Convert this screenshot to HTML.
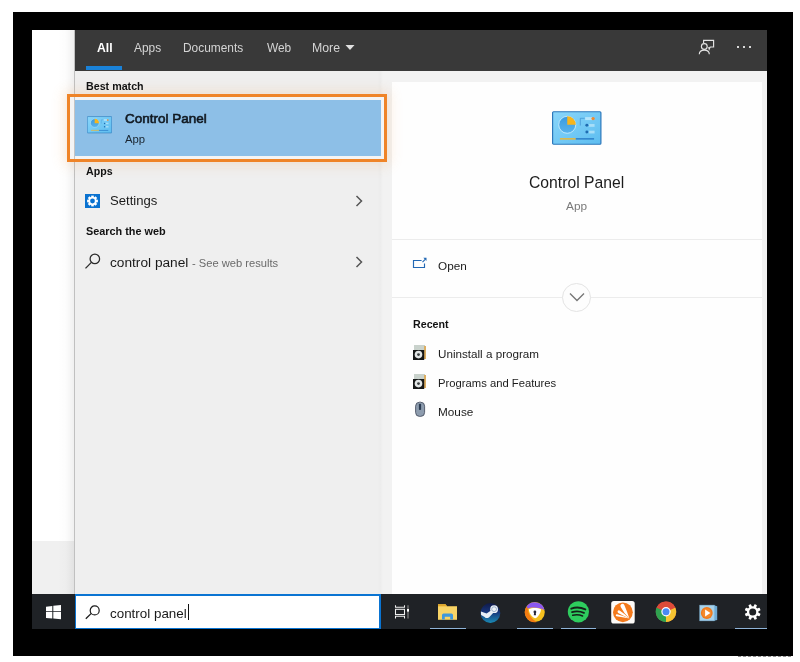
<!DOCTYPE html>
<html><head><meta charset="utf-8">
<style>
html,body{margin:0;padding:0}
body{width:800px;height:662px;position:relative;overflow:hidden;background:#fff;font-family:"Liberation Sans",sans-serif}
.a{position:absolute}
.t{position:absolute;white-space:nowrap;line-height:1;will-change:transform}
</style></head><body>
<div class="a" style="left:13px;top:12px;width:780px;height:643.5px;background:#000"></div>
<div class="a" style="left:738px;top:655px;width:53px;height:2px;background:repeating-linear-gradient(to right,rgba(0,0,0,0.55) 0 3px,rgba(0,0,0,0.1) 3px 5px);opacity:0.8"></div>
<div class="a" style="left:32px;top:30px;width:43px;height:511px;background:#fff"></div>
<div class="a" style="left:32px;top:541px;width:43px;height:54px;background:#f0f0f0"></div>
<div class="a" style="left:58px;top:30px;width:16px;height:565px;background:linear-gradient(to right,rgba(0,0,0,0),rgba(0,0,0,0.012) 50%,rgba(0,0,0,0.06))"></div>
<!-- search panel -->
<div class="a" style="left:74px;top:30px;width:1px;height:565px;background:#c0c0c0"></div>
<div class="a" style="left:75px;top:30px;width:692px;height:41px;background:#393939"></div>
<div class="a" style="left:86px;top:66px;width:36px;height:4px;background:#1a82d8"></div>
<div class="a" style="left:75px;top:71px;width:692px;height:524px;background:#efefef"></div>
<div class="a" style="left:378px;top:71px;width:14px;height:523px;background:linear-gradient(to right,#efefef,#ececec 15%,#f2f2f2 35%,#f2f2f2)"></div>
<div class="a" style="left:392px;top:71px;width:375px;height:523px;background:#f2f2f2"></div>
<div class="a" style="left:392px;top:82px;width:370px;height:512px;background:#fefefe"></div>
<!-- best match highlight -->
<div class="a" style="left:67px;top:94px;width:314px;height:62px;border:3px solid #ef8428;box-shadow:0 0 12px 3px rgba(245,160,80,0.19)"></div>
<div class="a" style="left:70px;top:97px;width:314px;height:62px;background:#f4f4f4"></div>
<div class="a" style="left:74px;top:97px;width:1px;height:62px;background:#c4c4c4"></div>
<div class="a" style="left:75px;top:100px;width:306px;height:56px;background:#8dbfe7"></div>
<svg viewBox="0 0 50 34" width="25" height="17.5" style="position:absolute;left:87px;top:116px">
<defs><linearGradient id="cpg1" x1="0" y1="0" x2="1" y2="1"><stop offset="0" stop-color="#8ad6fa"/><stop offset="1" stop-color="#5dbdf0"/></linearGradient>
<linearGradient id="pie1" x1="0" y1="0" x2="0" y2="1"><stop offset="0" stop-color="#3a9ae0"/><stop offset="1" stop-color="#57b3ec"/></linearGradient></defs>
<rect x="0.6" y="0.6" width="48.8" height="32.8" rx="1" fill="url(#cpg1)" stroke="#2d78bb" stroke-width="1.2"/>
<circle cx="15.4" cy="13.75" r="8.6" fill="url(#pie1)" stroke="#c8ecfc" stroke-width="0.9"/>
<path d="M15.4 13.75 L15.4 5.15 A8.6 8.6 0 0 1 24 13.75 Z" fill="#f7b51c"/>
<path d="M28.6 14.5 V7.2 H33" stroke="#3f8fd0" stroke-width="0.7" fill="none"/>
<rect x="33.5" y="6" width="7" height="3" fill="#b4e4fb"/>
<circle cx="41.5" cy="7.5" r="1.7" fill="#f08a30"/>
<circle cx="35.2" cy="14.3" r="1.5" fill="#1f6bb0"/><rect x="37.5" y="13" width="5.5" height="2.8" fill="#a8def8"/>
<circle cx="35.2" cy="21" r="1.5" fill="#1f6bb0"/><rect x="37.5" y="19.7" width="5.5" height="2.8" fill="#a8def8"/>
<rect x="8" y="27.3" width="16" height="1.4" fill="#f2b52a"/>
<rect x="24" y="27.4" width="18.5" height="1.2" fill="#1d6fc0"/>
</svg><svg viewBox="0 0 50 34" width="49.5" height="34" style="position:absolute;left:552px;top:111.2px">
<defs><linearGradient id="cpg2" x1="0" y1="0" x2="1" y2="1"><stop offset="0" stop-color="#8ad6fa"/><stop offset="1" stop-color="#5dbdf0"/></linearGradient>
<linearGradient id="pie2" x1="0" y1="0" x2="0" y2="1"><stop offset="0" stop-color="#3a9ae0"/><stop offset="1" stop-color="#57b3ec"/></linearGradient></defs>
<rect x="0.6" y="0.6" width="48.8" height="32.8" rx="1" fill="url(#cpg2)" stroke="#2d78bb" stroke-width="1.2"/>
<circle cx="15.4" cy="13.75" r="8.6" fill="url(#pie2)" stroke="#c8ecfc" stroke-width="0.9"/>
<path d="M15.4 13.75 L15.4 5.15 A8.6 8.6 0 0 1 24 13.75 Z" fill="#f7b51c"/>
<path d="M28.6 14.5 V7.2 H33" stroke="#3f8fd0" stroke-width="0.7" fill="none"/>
<rect x="33.5" y="6" width="7" height="3" fill="#b4e4fb"/>
<circle cx="41.5" cy="7.5" r="1.7" fill="#f08a30"/>
<circle cx="35.2" cy="14.3" r="1.5" fill="#1f6bb0"/><rect x="37.5" y="13" width="5.5" height="2.8" fill="#a8def8"/>
<circle cx="35.2" cy="21" r="1.5" fill="#1f6bb0"/><rect x="37.5" y="19.7" width="5.5" height="2.8" fill="#a8def8"/>
<rect x="8" y="27.3" width="16" height="1.4" fill="#f2b52a"/>
<rect x="24" y="27.4" width="18.5" height="1.2" fill="#1d6fc0"/>
</svg>
<div class="a" style="left:392px;top:239px;width:370px;height:1px;background:#ececec"></div>
<div class="a" style="left:392px;top:296.5px;width:370px;height:1.2px;background:#ececec"></div>
<div class="a" style="left:562px;top:283px;width:27px;height:27px;border:1px solid #e4e4e4;border-radius:50%;background:#fdfdfd"></div>
<svg class="a" style="left:568px;top:291px" width="18" height="12" viewBox="0 0 18 12"><path d="M2 2.5 L9 9.5 L16 2.5" stroke="#777" stroke-width="1.4" fill="none"/></svg>
<!-- settings icon -->
<div class="a" style="left:85px;top:194px;width:15px;height:14px;background:#0a72d0"></div>
<svg class="a" style="left:85px;top:194px" width="15" height="14" viewBox="0 0 15 14">
<g transform="translate(7.5,7)" fill="#fff">
<circle r="4"/>
<rect x="-1.3" y="-5.4" width="2.6" height="10.8"/>
<rect x="-1.3" y="-5.4" width="2.6" height="10.8" transform="rotate(45)"/>
<rect x="-1.3" y="-5.4" width="2.6" height="10.8" transform="rotate(90)"/>
<rect x="-1.3" y="-5.4" width="2.6" height="10.8" transform="rotate(135)"/>
</g><circle cx="7.5" cy="7" r="2.4" fill="#0a72d0"/></svg>
<!-- search icon left -->
<svg class="a" style="left:84px;top:253px" width="17" height="17" viewBox="0 0 17 17"><circle cx="10.85" cy="5.9" r="4.75" stroke="#2a2a2a" stroke-width="1.25" fill="none"/><path d="M7.4 9.4 L1.5 15.4" stroke="#2a2a2a" stroke-width="1.3"/></svg>
<!-- chevrons -->
<svg class="a" style="left:354px;top:194px" width="10" height="14" viewBox="0 0 10 14"><path d="M2.5 2 L7.5 7 L2.5 12" stroke="#555" stroke-width="1.5" fill="none"/></svg>
<svg class="a" style="left:354px;top:255px" width="10" height="14" viewBox="0 0 10 14"><path d="M2.5 2 L7.5 7 L2.5 12" stroke="#555" stroke-width="1.5" fill="none"/></svg>
<!-- open icon -->
<svg class="a" style="left:412px;top:256px" width="16" height="13" viewBox="0 0 16 13"><path d="M9.6 4.5 H1.5 V11.5 H12.5 V7.4" stroke="#2268b4" stroke-width="1.15" fill="none"/><path d="M10.5 6.2 L13.2 3.4" stroke="#2268b4" stroke-width="1.1"/><path d="M11.3 1.7 H14.5 V4.9 Z" fill="#2268b4"/></svg>
<!-- recent icons -->
<svg class="a" style="left:412px;top:344px" width="15" height="16" viewBox="0 0 15 16"><rect x="2" y="1" width="11" height="5.5" fill="#c9d2cc"/><rect x="12" y="2" width="2" height="13" fill="#dcae62"/><rect x="1" y="6" width="11.2" height="10" fill="#161818"/><circle cx="6.5" cy="10.6" r="3.8" fill="#e2e6e6"/><circle cx="6.5" cy="10.6" r="1.4" fill="#3a3f40"/></svg>
<svg class="a" style="left:412px;top:373px" width="15" height="16" viewBox="0 0 15 16"><rect x="2" y="1" width="11" height="5.5" fill="#c9d2cc"/><rect x="12" y="2" width="2" height="13" fill="#dcae62"/><rect x="1" y="6" width="11.2" height="10" fill="#161818"/><circle cx="6.5" cy="10.6" r="3.8" fill="#e2e6e6"/><circle cx="6.5" cy="10.6" r="1.4" fill="#3a3f40"/></svg>
<svg class="a" style="left:414px;top:401px" width="12" height="17" viewBox="0 0 12 17"><rect x="1.6" y="1.2" width="9" height="14.2" rx="4" fill="#8d9cae" stroke="#4c5464" stroke-width="0.9"/><rect x="4.9" y="2.8" width="2.2" height="6.3" rx="0.8" fill="#2c3c52"/></svg>
<!-- feedback icon + dots -->
<svg class="a" style="left:698px;top:39px" width="18" height="17" viewBox="0 0 18 17"><path d="M5.6 4 V1.4 H15.6 V8 H12.2 L11.2 10.2 L10.6 8.2" stroke="#e4e4e4" stroke-width="1.15" fill="none"/><circle cx="6.3" cy="7.5" r="2.9" stroke="#e4e4e4" stroke-width="1.15" fill="none"/><path d="M1.3 15.2 C1.3 12.3 3.4 11.1 6.3 11.1 C9.2 11.1 11.3 12.3 11.3 15.2" stroke="#e4e4e4" stroke-width="1.15" fill="none"/></svg>
<div class="a" style="left:737px;top:46px;width:2px;height:2px;background:#d8d8d8"></div>
<div class="a" style="left:743px;top:46px;width:2px;height:2px;background:#d8d8d8"></div>
<div class="a" style="left:749px;top:46px;width:2px;height:2px;background:#d8d8d8"></div>
<svg class="a" style="left:345px;top:44px" width="10" height="7" viewBox="0 0 10 7"><path d="M0.5 1 H9.5 L5 6 Z" fill="#e0e0e0"/></svg>
<!-- taskbar -->
<div class="a" style="left:32px;top:594px;width:735px;height:35px;background:#1f2226"></div>
<svg class="a" style="left:45px;top:604px" width="17" height="16" viewBox="0 0 17 16"><path d="M1 2.7 L7.3 2.0 V7.2 H1 Z M8.3 1.87 L16 1 V7.2 H8.3 Z M1 8.1 H7.3 V14.5 L1 14 Z M8.3 8.1 H16 V15.2 L8.3 14.58 Z" fill="#fff"/></svg>
<div class="a" style="left:74.5px;top:594px;width:306.5px;height:35px;background:#0a74d2"></div>
<div class="a" style="left:76px;top:596px;width:303px;height:32px;background:#ffffff"></div>
<svg class="a" style="left:84px;top:604px" width="17" height="16" viewBox="0 0 17 16"><circle cx="10.7" cy="6.4" r="4.5" stroke="#1a1a1a" stroke-width="1.2" fill="none"/><path d="M7.3 9.4 L1.8 14.8" stroke="#1a1a1a" stroke-width="1.3"/></svg>
<div class="a" style="left:188px;top:604px;width:1px;height:16px;background:#111"></div>
<!-- task view -->
<svg class="a" style="left:393px;top:603px" width="18" height="17" viewBox="0 0 18 17">
<path d="M2.5 2.3 V4.3 H11.5 V2.3 M2.5 15.5 V13.3 H11.5 V15.5" stroke="#f0f0f0" stroke-width="1.05" fill="none"/>
<rect x="2.5" y="6.3" width="9" height="5.2" stroke="#f0f0f0" stroke-width="1.05" fill="none"/>
<path d="M15 2.3 V15.5" stroke="#8a8a8a" stroke-width="1.1"/>
<rect x="14" y="6" width="2" height="2.6" fill="#ffffff"/>
</svg>
<!-- folder -->
<svg class="a" style="left:438px;top:604px" width="19" height="16" viewBox="0 0 19 16">
<path d="M0 0.3 H7.5 L9 2.3 H19 V15.6 H0 Z" fill="#f4c95a"/>
<path d="M0 0.3 H7.5 L9 2.3 H0 Z" fill="#dfa72a"/>
<rect x="0" y="2.8" width="19" height="12.8" fill="#f8d466"/>
<path d="M4 15.6 V11 Q4 9.4 5.6 9.4 H13.4 Q15 9.4 15 11 V15.6 H12.2 V12.8 H6.8 V15.6 Z" fill="#3f98dc"/>
</svg>
<div class="a" style="left:430px;top:627.5px;width:36px;height:1.5px;background:#8fb4d8"></div>
<!-- steam -->
<svg class="a" style="left:480px;top:602px" width="22" height="22" viewBox="0 0 22 22">
<defs><linearGradient id="stg" x1="0" y1="0" x2="0" y2="1"><stop offset="0" stop-color="#101a48"/><stop offset="0.45" stop-color="#17357a"/><stop offset="1" stop-color="#1a8ab4"/></linearGradient></defs>
<circle cx="10.4" cy="11" r="9.9" fill="url(#stg)"/>
<path d="M0.9 9.4 L6.6 11.6 L11.4 8.2 L13.6 10.6 L9.4 14.9 C8.3 16.4 5.8 16.5 4.6 14.9 L1.1 13 Z" fill="#e8eef6"/>
<circle cx="14.1" cy="7.2" r="3.9" fill="#eef2f8"/>
<circle cx="14.1" cy="7.2" r="2.4" fill="none" stroke="#6a88b0" stroke-width="0.6"/>
</svg>
<!-- avast secure browser -->
<svg class="a" style="left:524px;top:601px" width="22" height="22" viewBox="0 0 22 22">
<circle cx="10.8" cy="11.1" r="10" fill="#f5c01e"/>
<path d="M2.6 5.5 A10 10 0 0 1 20.6 9.2 C17 7.2 12.5 6.2 8 6.6 C6 6.9 4.2 7.5 3.5 8 Z" fill="#8b57ee"/>
<path d="M2.6 5.5 C3.2 6.5 3.8 7.5 4 8.5 C4.5 13.5 7.5 18 12.8 21 A10 10 0 0 1 2.6 5.5 Z" fill="#f27c12"/>
<path d="M4.8 8.2 C8 6.6 13.5 6.6 17 8.2 C16.6 12.6 13.8 16.4 11 17.3 C8 16.2 5.2 12.4 4.8 8.2 Z" fill="#ffffff"/>
<circle cx="10.9" cy="11" r="1.4" fill="#2a2a3a"/>
<path d="M10.1 11.4 H11.7 L12 14.2 H9.8 Z" fill="#2a2a3a"/>
</svg>
<div class="a" style="left:517px;top:627.5px;width:36px;height:1.5px;background:#8fb4d8"></div>
<!-- spotify -->
<svg class="a" style="left:567px;top:601px" width="23" height="22" viewBox="0 0 23 22">
<circle cx="11.4" cy="10.8" r="10.6" fill="#2ecc5e"/>
<path d="M4.3 7.6 C8.5 6.2 14 6.5 18.3 8.4" stroke="#15201a" stroke-width="2" fill="none" stroke-linecap="round"/>
<path d="M5 11.1 C8.8 10 13.4 10.3 17 11.9" stroke="#15201a" stroke-width="1.8" fill="none" stroke-linecap="round"/>
<path d="M5.7 14.3 C9 13.5 12.5 13.7 15.6 15" stroke="#15201a" stroke-width="1.5" fill="none" stroke-linecap="round"/>
</svg>
<div class="a" style="left:561px;top:627.5px;width:35px;height:1.5px;background:#8fb4d8"></div>
<!-- avast -->
<svg class="a" style="left:611px;top:600.5px" width="24" height="23" viewBox="0 0 24 23">
<rect x="0.2" y="0.1" width="23.5" height="22.4" rx="2.6" fill="#fdfbf8"/>
<circle cx="11.9" cy="11.3" r="9.9" fill="#f47a1c"/>
<path d="M13.3 3.9 Q16 10 18.4 17.4 Q12.5 11.5 9.7 5.9 A2 2 0 0 1 13.3 3.9 Z" fill="#fff"/>
<path d="M8.6 9.6 Q13 12.5 18.4 17.4 Q12 14.5 7.2 11.9 A1.3 1.3 0 0 1 8.6 9.6 Z" fill="#fff"/>
<path d="M6.1 13.2 Q12 14.8 18.4 17.4 Q11 16.3 5.5 15.2 A1 1 0 0 1 6.1 13.2 Z" fill="#fff"/>
</svg>
<!-- chrome -->
<svg class="a" style="left:655px;top:601px" width="22" height="22" viewBox="0 0 22 22">
<circle cx="11" cy="10.8" r="10.2" fill="#dd4b39"/>
<path d="M11 10.8 L20.2 6.4 A10.2 10.2 0 0 1 11 21 Z" fill="#f6c431"/>
<path d="M11 10.8 L11 21 A10.2 10.2 0 0 1 1.6 6.6 Z" fill="#2fa24f"/>
<path d="M11 10.8 L1.6 6.6 A10.2 10.2 0 0 1 20.2 6.4 Z" fill="#dd4b39"/>
<circle cx="11" cy="10.8" r="4.7" fill="#ffffff"/>
<circle cx="11" cy="10.8" r="3.5" fill="#4a8af4"/>
</svg>
<!-- media player -->
<svg class="a" style="left:699px;top:604px" width="19" height="18" viewBox="0 0 19 18">
<path d="M15 1.2 L18.2 2.2 V16 L15 16.8 Z" fill="#6eaad4"/>
<rect x="0.8" y="1.2" width="14.4" height="15.6" fill="#a8d2ea" stroke="#86bde0" stroke-width="0.6"/>
<circle cx="7.8" cy="9" r="5.9" fill="#ee7a1e"/>
<circle cx="7.8" cy="9" r="4.6" fill="#f48a2c"/>
<path d="M6.1 5.6 L11.4 9 L6.1 12.4 Z" fill="#fff"/>
</svg>
<!-- settings gear -->
<svg class="a" style="left:744px;top:603px" width="18" height="18" viewBox="0 0 18 18">
<g transform="translate(8.7,9) rotate(22.5)" fill="#ffffff">
<circle r="5.8"/>
<rect x="-1.4" y="-8" width="2.8" height="16" rx="0.6"/>
<rect x="-1.4" y="-8" width="2.8" height="16" rx="0.6" transform="rotate(45)"/>
<rect x="-1.4" y="-8" width="2.8" height="16" rx="0.6" transform="rotate(90)"/>
<rect x="-1.4" y="-8" width="2.8" height="16" rx="0.6" transform="rotate(135)"/>
</g>
<circle cx="8.7" cy="9" r="3.5" fill="#1f2226"/>
</svg>
<div class="a" style="left:735px;top:627.5px;width:32px;height:1.5px;background:#8fb4d8"></div>
<div class="t" style="left:96.50px;top:42.17px;font-size:12.20px;font-weight:bold;color:#ffffff;">All</div>
<div class="t" style="left:134.00px;top:43.43px;font-size:11.90px;font-weight:normal;color:#d4d4d4;">Apps</div>
<div class="t" style="left:183.25px;top:43.43px;font-size:11.90px;font-weight:normal;color:#d4d4d4;">Documents</div>
<div class="t" style="left:266.50px;top:43.43px;font-size:11.90px;font-weight:normal;color:#d4d4d4;">Web</div>
<div class="t" style="left:312.00px;top:42.09px;font-size:12.30px;font-weight:normal;color:#d4d4d4;">More</div>
<div class="t" style="left:85.50px;top:80.94px;font-size:10.70px;font-weight:bold;color:#121212;">Best match</div>
<div class="t" style="left:124.50px;top:111.97px;font-size:13.50px;font-weight:normal;color:#101820;-webkit-text-stroke:0.6px #101820">Control Panel</div>
<div class="t" style="left:124.80px;top:134.43px;font-size:11.30px;font-weight:normal;color:#1a2530;">App</div>
<div class="t" style="left:85.50px;top:165.59px;font-size:10.64px;font-weight:bold;color:#121212;">Apps</div>
<div class="t" style="left:110.10px;top:194.31px;font-size:13.10px;font-weight:normal;color:#1a1a1a;">Settings</div>
<div class="t" style="left:85.50px;top:225.81px;font-size:10.86px;font-weight:bold;color:#121212;">Search the web</div>
<div class="t" style="left:110.10px;top:255.81px;font-size:13.69px;font-weight:normal;color:#1a1a1a;">control panel</div>
<div class="t" style="left:191.50px;top:257.54px;font-size:11.17px;font-weight:normal;color:#6a6a6a;">- See web results</div>
<div class="t" style="left:528.60px;top:174.70px;font-size:15.71px;font-weight:normal;color:#1c1c1c;">Control Panel</div>
<div class="t" style="left:565.90px;top:200.99px;font-size:11.82px;font-weight:normal;color:#7a7a7a;">App</div>
<div class="t" style="left:437.50px;top:260.06px;font-size:11.74px;font-weight:normal;color:#1c1c1c;">Open</div>
<div class="t" style="left:412.90px;top:318.94px;font-size:10.70px;font-weight:bold;color:#121212;">Recent</div>
<div class="t" style="left:437.90px;top:348.12px;font-size:11.67px;font-weight:normal;color:#1c1c1c;">Uninstall a program</div>
<div class="t" style="left:437.50px;top:377.87px;font-size:11.26px;font-weight:normal;color:#1c1c1c;">Programs and Features</div>
<div class="t" style="left:437.50px;top:406.43px;font-size:11.78px;font-weight:normal;color:#1c1c1c;">Mouse</div>
<div class="t" style="left:110.00px;top:607.14px;font-size:13.42px;font-weight:normal;color:#1a1a1a;">control panel</div>
</body></html>
